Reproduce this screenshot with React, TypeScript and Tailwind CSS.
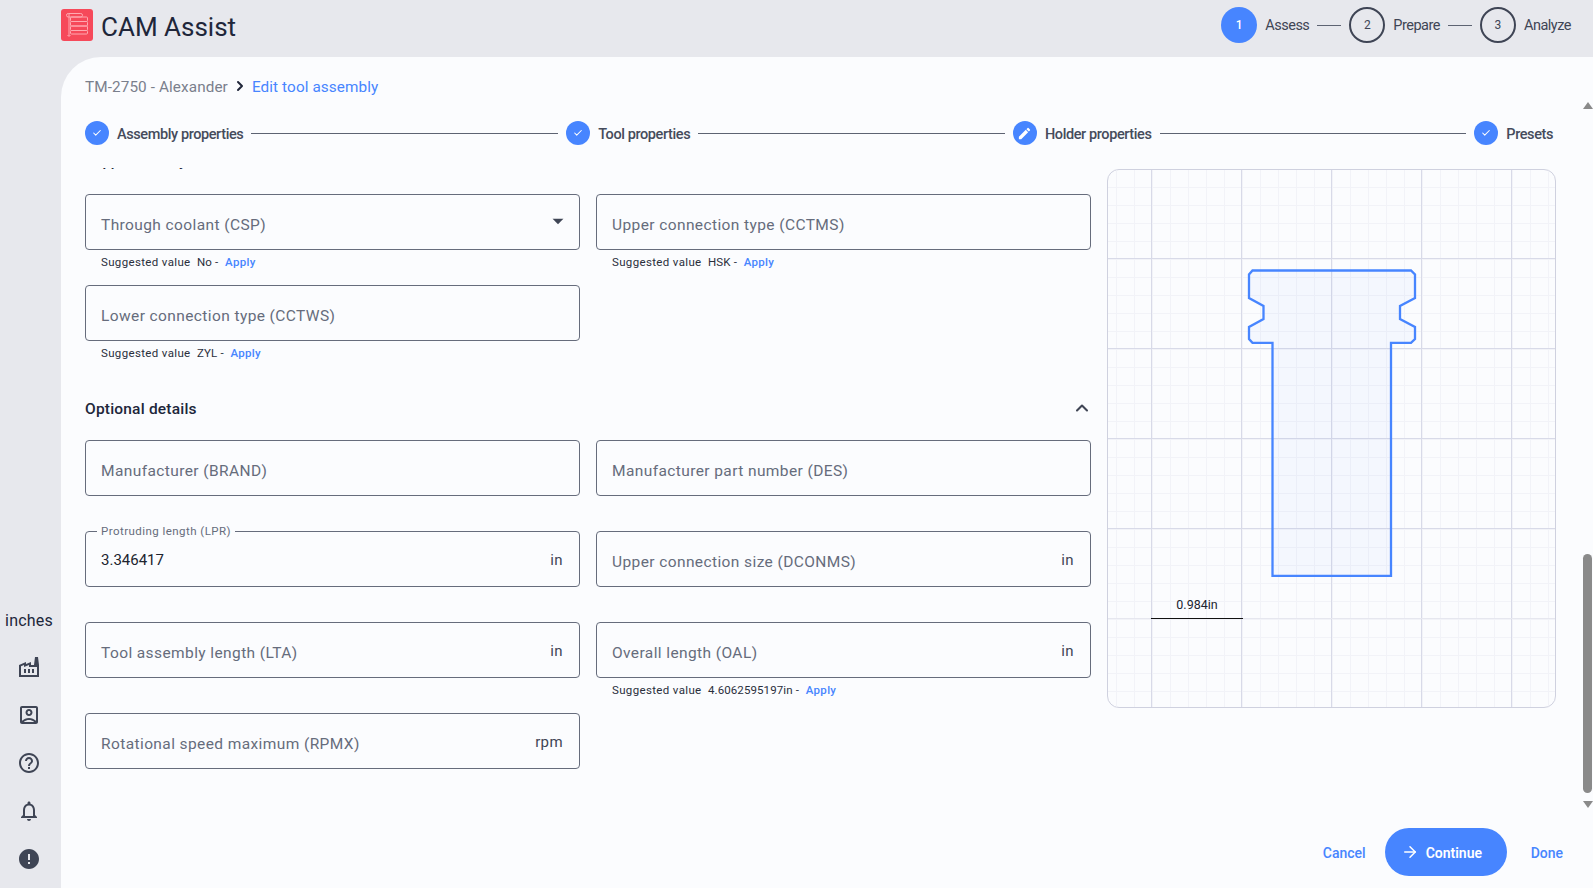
import { Check, ChevronRight, ChevronUp, ArrowRight } from "lucide-react";
import {
  MdArrowDropDown,
  MdEdit,
  MdError,
  MdHelpOutline,
  MdNotificationsNone,
  MdOutlineAccountBox,
  MdOutlineFactory,
} from "react-icons/md";
import type { ReactNode } from "react";

const majorX = [44, 134, 224, 314, 404];
const majorY = [89, 179, 269, 359, 449];
const minorX = Array.from({ length: 25 }, (_, i) => 8 + i * 18);
const minorY = Array.from({ length: 30 }, (_, i) => 17 + i * 18);

const Logo = () => (
  <svg width="32" height="32" viewBox="0 0 32 32" className="shrink-0">
    <rect width="32" height="32" rx="3" fill="#f6495a" />
    <g fill="none" stroke="#ffa9b1" strokeWidth="1">
      <rect x="5.500" y="4.500" width="16" height="3.500" rx="1.700" />
      <rect x="9.500" y="8" width="17" height="4.500" rx="1" />
      <rect x="9.500" y="12.500" width="17" height="4.500" rx="1" />
      <rect x="9.500" y="17" width="17" height="4.500" rx="1" />
      <rect x="9.500" y="21.500" width="17" height="3.500" rx="1" />
      <path d="M8 5v22M6.500 26L8 27.500L9.500 26" />
    </g>
  </svg>
);

const TopStep = ({ n, label, active }: { n: number; label: string; active?: boolean }) => (
  <div className="flex items-center gap-2">
    {active ? (
      <div className="flex h-9 w-9 items-center justify-center rounded-full bg-[#4785ff] text-xs font-medium text-white">
        {n}
      </div>
    ) : (
      <div className="flex h-9 w-9 items-center justify-center rounded-full border-2 border-[#3f4555] text-xs text-[#3f4555]">
        {n}
      </div>
    )}
    <span className="pt-[2px] text-[14.500px] tracking-[-0.5px] text-[#3f4555]">{label}</span>
  </div>
);

const Step = ({ label, edit }: { label: string; edit?: boolean }) => (
  <div className="flex shrink-0 items-center gap-2">
    <div className="flex h-6 w-6 items-center justify-center rounded-full bg-[#4785ff] text-white">
      {edit ? <MdEdit size={15} /> : <Check size={10} strokeWidth={2.5} />}
    </div>
    <span className="pt-[3px] text-[14.500px] font-medium tracking-[-0.4px] text-[#454b5b]">{label}</span>
  </div>
);

const Helper = ({ value }: { value: string }) => (
  <div className="flex h-[35px] items-start pl-4 pt-[5px] text-[11.500px] leading-[14px] tracking-[0.35px] text-[#2a2f3c]">
    Suggested value&nbsp;&nbsp;<span className="tracking-[0.1px]">{value}</span>&nbsp;-&nbsp;&nbsp;
    <span className="font-medium tracking-[0.3px] text-[#4785ff]">Apply</span>
  </div>
);

const Field = ({
  label,
  suffix,
  suggested,
  children,
}: {
  label: string;
  suffix?: string;
  suggested?: string;
  children?: ReactNode;
}) => (
  <div>
    <div className="flex h-14 items-center rounded border border-[#666c7c] pl-[15px] pr-[16px]">
      <span className="flex-1 pt-[7px] text-[15.500px] tracking-[0.4px] text-[#666c7c]">{label}</span>
      {suffix && <span className="pt-[2px] text-[15px] tracking-[0.4px] text-[#3f4555]">{suffix}</span>}
      {children}
    </div>
    {suggested ? <Helper value={suggested} /> : <div className="h-[35px]" />}
  </div>
);

const FilledField = ({ label, value, suffix }: { label: string; value: string; suffix: string }) => (
  <div>
    <div className="relative flex h-14 items-center rounded border border-[#666c7c] pl-[15px] pr-[16px]">
      <span className="absolute -top-[8px] left-[11px] bg-[#fbfcfe] px-1 text-[11.500px] leading-[14px] tracking-[0.45px] text-[#666c7c]">
        {label}
      </span>
      <span className="flex-1 pt-[2px] text-[15px] text-[#20242f]">{value}</span>
      <span className="pt-[2px] text-[15px] tracking-[0.4px] text-[#3f4555]">{suffix}</span>
    </div>
    <div className="h-[35px]" />
  </div>
);

const Preview = () => (
  <div className="relative mt-px h-[539px] w-[449px] shrink-0 overflow-hidden rounded-xl border border-[#cfd1df]">
    <svg width="449" height="539" viewBox="0 0 449 539" className="block">
      {minorX.map((x) => (
        <line key={x} x1={x + 0.5} x2={x + 0.5} y1="0" y2="539" stroke="#f2f3f8" />
      ))}
      {minorY.map((y) => (
        <line key={y} y1={y + 0.5} y2={y + 0.5} x1="0" x2="449" stroke="#f2f3f8" />
      ))}
      {majorX.map((x) => (
        <line key={x} x1={x - 0.5} x2={x - 0.5} y1="0" y2="539" stroke="#d8dae8" />
      ))}
      {majorY.map((y) => (
        <line key={y} y1={y - 0.5} y2={y - 0.5} x1="0" x2="449" stroke={y === 449 ? "#e6e7ef" : "#d8dae8"} />
      ))}
      <path
        d="M144.500 100.500H303L307 104.500V128L292 136V149L307 157V169L303 172.800H283V405.800H164.500V172.800H144.500L141 169V157L155.500 149V136L141 128V104.500Z"
        fill="#4785ff"
        fillOpacity="0.04"
        stroke="#4785ff"
        strokeWidth="2.300"
      />
      <line x1="43" x2="135" y1="448.500" y2="448.500" stroke="#111" />
      <text x="89" y="438.500" textAnchor="middle" fontSize="12.500" fill="#20242f" fontFamily="Roboto, sans-serif">
        0.984in
      </text>
    </svg>
  </div>
);

export default function App() {
  return (
    <div className="flex h-screen w-full flex-col overflow-hidden bg-[#e7e8ed] font-['Roboto',sans-serif]">
      <header className="flex h-[57px] shrink-0 items-center justify-between pb-[7px] pl-[61px] pr-[22px]">
        <div className="flex items-center gap-2">
          <Logo />
          <span className="pt-[3px] text-[26px] leading-none text-[#20263a]">CAM Assist</span>
        </div>
        <div className="flex items-center gap-2">
          <TopStep n={1} label="Assess" active />
          <div className="h-px w-6 bg-[#5d6372]" />
          <TopStep n={2} label="Prepare" />
          <div className="h-px w-6 bg-[#5d6372]" />
          <TopStep n={3} label="Analyze" />
        </div>
      </header>

      <div className="flex min-h-0 flex-1">
        <aside className="flex w-[61px] shrink-0 flex-col items-center justify-end gap-6 pb-[17px] pr-[3px] text-[#3f4555]">
          <span className="text-[16px] leading-5 tracking-[0.2px] text-[#20263a]">inches</span>
          <MdOutlineFactory size={24} />
          <MdOutlineAccountBox size={24} />
          <MdHelpOutline size={24} />
          <MdNotificationsNone size={24} />
          <MdError size={24} />
        </aside>

        <main className="relative flex min-w-0 flex-1 flex-col rounded-tl-[40px] bg-[#fbfcfe] pb-3">
          <div className="ml-6 mt-[20px] flex h-[21px] items-center text-[15.300px] tracking-[0.1px]">
            <span className="text-[#7a7f8c]">TM-2750 - Alexander</span>
            <ChevronRight size={16} strokeWidth={3} className="mx-1 -mt-[3px] text-[#20263a]" />
            <span className="text-[#4785ff]">Edit tool assembly</span>
          </div>

          <div className="ml-6 mr-10 mt-[23px] flex h-6 items-center gap-2">
            <Step label="Assembly properties" />
            <div className="h-px flex-1 bg-[#5d6372]" />
            <Step label="Tool properties" />
            <div className="h-px flex-1 bg-[#5d6372]" />
            <Step label="Holder properties" edit />
            <div className="h-px flex-1 bg-[#5d6372]" />
            <Step label="Presets" />
          </div>

          <div className="mt-[23px] flex min-h-0 flex-1 gap-4 overflow-hidden pl-6 pr-[37px]">
            <div className="w-[1006px] shrink-0">
              <div className="-mt-[17px] mb-[23px] h-5 text-[15px] font-medium leading-5 text-[#20263a]">
                Supplementary details
              </div>
              <div className="grid grid-cols-[495px_495px] gap-x-4">
                <Field label="Through coolant (CSP)" suggested="No">
                  <MdArrowDropDown size={26} className="-mr-[8px] -mt-[3px] text-[#3f4555]" />
                </Field>
                <Field label="Upper connection type (CCTMS)" suggested="HSK" />
                <Field label="Lower connection type (CCTWS)" suggested="ZYL" />
              </div>
              <div className="flex h-[64px] items-center justify-between">
                <span className="mt-[3px] text-[15.500px] font-medium tracking-[0.2px] text-[#20263a]">
                  Optional details
                </span>
                <ChevronUp size={20} strokeWidth={2.5} className="-mr-px -mt-px text-[#3f4555]" />
              </div>
              <div className="grid grid-cols-[495px_495px] gap-x-4">
                <Field label="Manufacturer (BRAND)" />
                <Field label="Manufacturer part number (DES)" />
                <FilledField label="Protruding length (LPR)" value="3.346417" suffix="in" />
                <Field label="Upper connection size (DCONMS)" suffix="in" />
                <Field label="Tool assembly length (LTA)" suffix="in" />
                <Field label="Overall length (OAL)" suffix="in" suggested="4.6062595197in" />
                <Field label="Rotational speed maximum (RPMX)" suffix="rpm" />
              </div>
            </div>
            <Preview />
          </div>

          <div className="flex h-12 shrink-0 items-center justify-end pr-[30px] text-[14px] font-medium text-[#4785ff]">
            <span className="pt-[2px]">Cancel</span>
            <button className="ml-[19px] mr-6 flex h-12 w-[122px] items-center gap-[7px] rounded-full bg-[#4785ff] pl-4 pt-[2px] font-semibold text-white">
              <ArrowRight size={18} className="-mt-[2px]" />
              Continue
            </button>
            <span className="pt-[2px]">Done</span>
          </div>

          {/* scrollbar of the form area */}
          <div className="absolute right-px top-[45px] flex h-[706px] w-[9px] flex-col items-center justify-between">
            <div className="h-0 w-0 border-x-[5px] border-b-[7px] border-x-transparent border-b-[#8a8a8a]" />
            <div className="mb-2 mt-auto h-[239px] w-[9px] rounded-full bg-[#8a8a8a]" />
            <div className="h-0 w-0 border-x-[5px] border-t-[7px] border-x-transparent border-t-[#8a8a8a]" />
          </div>
        </main>
      </div>
    </div>
  );
}
